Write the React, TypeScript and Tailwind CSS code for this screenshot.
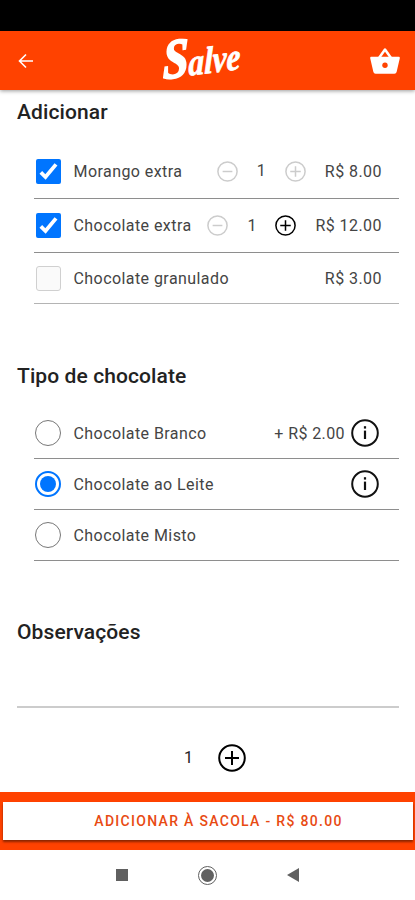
import { useState } from "react"
import clsx from "clsx"

interface Extra {
  name: string
  price: string
  checked: boolean
  quantity?: number
  canAdd?: boolean
  height: string
}

const extras: Extra[] = [
  { name: "Morango extra", price: "R$ 8.00", checked: true, quantity: 1, height: "h-[55px] border-[#8e8e8e]" },
  { name: "Chocolate extra", price: "R$ 12.00", checked: true, quantity: 1, canAdd: true, height: "h-[54px] border-[#8e8e8e]" },
  { name: "Chocolate granulado", price: "R$ 3.00", checked: false, height: "h-[51px] border-[#b4b4b4]" },
]

const types = [
  { name: "Chocolate Branco", price: "+ R$ 2.00", info: true },
  { name: "Chocolate ao Leite", price: "", info: true },
  { name: "Chocolate Misto", price: "", info: false },
]

function CircleIcon({ kind, className }: { kind: "plus" | "minus" | "info"; className: string }) {
  return (
    <svg viewBox="0 0 28 28" fill="none" stroke="currentColor" strokeWidth="2" className={clsx("shrink-0", className)}>
      <circle cx="14" cy="14" r="12.8" />
      {kind === "info" ? (
        <>
          <path d="M14 11.6v8.4" strokeWidth="2.2" />
          <path d="M14 7.2v2.4" strokeWidth="2.2" />
        </>
      ) : (
        <path d={kind === "plus" ? "M14 7v14M7 14h14" : "M7.5 14h13"} />
      )}
    </svg>
  )
}

function Checkbox({ checked }: { checked: boolean }) {
  if (!checked) {
    return <span className="size-[25px] shrink-0 rounded-[3px] border border-[#d0d0d0] bg-[#fafafa]" />
  }
  return (
    <span className="flex size-[25px] shrink-0 items-center justify-center rounded-[2px] bg-[#0075ff]">
      <svg viewBox="0 0 25 25" fill="none" stroke="#fff" strokeWidth="3.8" className="size-[25px]">
        <path d="M4.8 13.4l4.7 4.6L20 5.4" />
      </svg>
    </span>
  )
}

function Radio({ checked }: { checked: boolean }) {
  return (
    <span
      className={clsx(
        "flex size-[26px] shrink-0 items-center justify-center rounded-full",
        checked ? "border-2 border-[#0075ff]" : "border-[1.5px] border-[#777]"
      )}
    >
      {checked && <span className="size-4 rounded-full bg-[#0075ff]" />}
    </span>
  )
}

function Logo() {
  return (
    <div className="-mt-[7px] flex h-[46px] w-[76px] origin-left -skew-y-6 scale-x-[0.82] items-baseline font-['Liberation_Serif',serif] font-bold text-white italic">
      <span className="text-[56px] leading-[52px] [-webkit-text-stroke:2px_white]">S</span>
      <span className="text-[38px] leading-[52px] [-webkit-text-stroke:0.8px_white]">alve</span>
    </div>
  )
}

export default function App() {
  const [type, setType] = useState("Chocolate ao Leite")

  return (
    <div className="flex h-[900px] w-[415px] flex-col overflow-hidden bg-white font-[Roboto,sans-serif] text-[16px] text-[#444]">
      <div className="h-[31px] shrink-0 bg-black" />

      <header className="flex h-[59px] shrink-0 items-center bg-[#ff4200] pr-[15px] pl-[18px] text-white shadow-[0_1px_4px_rgba(0,0,0,0.4)]">
        <svg viewBox="0 0 16 16" fill="none" stroke="currentColor" strokeWidth="1.6" className="mr-[129px] size-4 shrink-0">
          <path d="M15 8H2M8 1.5L1.5 8L8 14.5" />
        </svg>
        <Logo />
        <svg viewBox="0 0 30 26" className="ml-auto h-[26px] w-[30px] shrink-0">
          <path d="M9 10L15 1.5L21 10" fill="none" stroke="#fff" strokeWidth="2.5" strokeLinejoin="round" />
          <path d="M1.2 8.8h27.6q1.2 0 1 1.4L26.6 24q-.4 1.800-2.200 1.800H5.600Q3.800 25.800 3.400 24L.2 10.200Q0 8.800 1.200 8.800z" fill="#fff" />
          <circle cx="15" cy="17.300" r="2.700" fill="#ff4200" />
        </svg>
      </header>

      <main className="flex min-h-0 grow flex-col pr-4 pl-[17px]">
        <h2 className="mt-[8px] h-7 text-[21px] leading-7 font-medium tracking-[0.1px] text-[#222]">Adicionar</h2>
        <ul className="mt-[18px] ml-[17px]">
          {extras.map((item) => (
            <li key={item.name} className={clsx("flex items-center border-b-[1.5px] pr-[17px] pl-[1.5px]", item.height)}>
              <Checkbox checked={item.checked} />
              <span className="ml-[13px] pt-px tracking-[0.43px]">{item.name}</span>
              <div className="ml-auto flex items-center">
                {item.quantity && (
                  <>
                    <CircleIcon kind="minus" className="size-[21px] text-[#ccc]" />
                    <span className="w-[47px] text-center">{item.quantity}</span>
                    <CircleIcon kind="plus" className={clsx("mr-[19px] size-[21px]", item.canAdd ? "text-black" : "text-[#ccc]")} />
                  </>
                )}
                <span className="pt-px tracking-[0.45px]">{item.price}</span>
              </div>
            </li>
          ))}
        </ul>

        <h2 className="mt-[58px] h-7 text-[21px] leading-7 font-medium tracking-[0.1px] text-[#222]">Tipo de chocolate</h2>
        <ul className="mt-[18px] ml-[17px]">
          {types.map((item) => (
            <li
              key={item.name}
              onClick={() => setType(item.name)}
              className="flex h-[51px] items-center border-b-[1.5px] border-[#8e8e8e] pr-5 pl-[1px]"
            >
              <Radio checked={item.name === type} />
              <span className="ml-[12.5px] pt-px tracking-[0.43px]">{item.name}</span>
              <span className="mr-[6px] ml-auto pt-px tracking-[0.4px]">{item.price}</span>
              {item.info && <CircleIcon kind="info" className="size-7 text-[#111]" />}
            </li>
          ))}
        </ul>

        <h2 className="mt-[57px] h-7 text-[21px] leading-7 font-medium tracking-[0.1px] text-[#222]">Observações</h2>
        <div className="h-[62px] border-b-2 border-[#ccc]" />
        <div className="mt-9 flex items-center pl-[167px]">
          <span className="w-[34px] text-[#222]">1</span>
          <CircleIcon kind="plus" className="size-7 text-black" />
        </div>
      </main>

      <footer className="shrink-0">
        <div className="h-[58px] bg-[#ff4200] px-[2.5px] pt-[10px]">
          <button className="block h-[38px] w-full bg-white pl-[22px] text-center text-[14px] font-medium tracking-[1.3px] text-[#e84a12] shadow-[0_2px_2px_rgba(110,30,0,0.8)]">
            ADICIONAR À SACOLA - R$ 80.00
          </button>
        </div>
        <div className="flex h-[50px] items-center pl-[116px] text-[#606060]">
          <span className="size-3 bg-current" />
          <span className="ml-[70px] flex size-[19px] items-center justify-center rounded-full border-[1.5px] border-current">
            <span className="size-[13px] rounded-full bg-current" />
          </span>
          <svg viewBox="0 0 12 14" className="ml-[70px] h-[14px] w-3" fill="currentColor">
            <path d="M12 0v14L0 7z" />
          </svg>
        </div>
      </footer>
    </div>
  )
}
